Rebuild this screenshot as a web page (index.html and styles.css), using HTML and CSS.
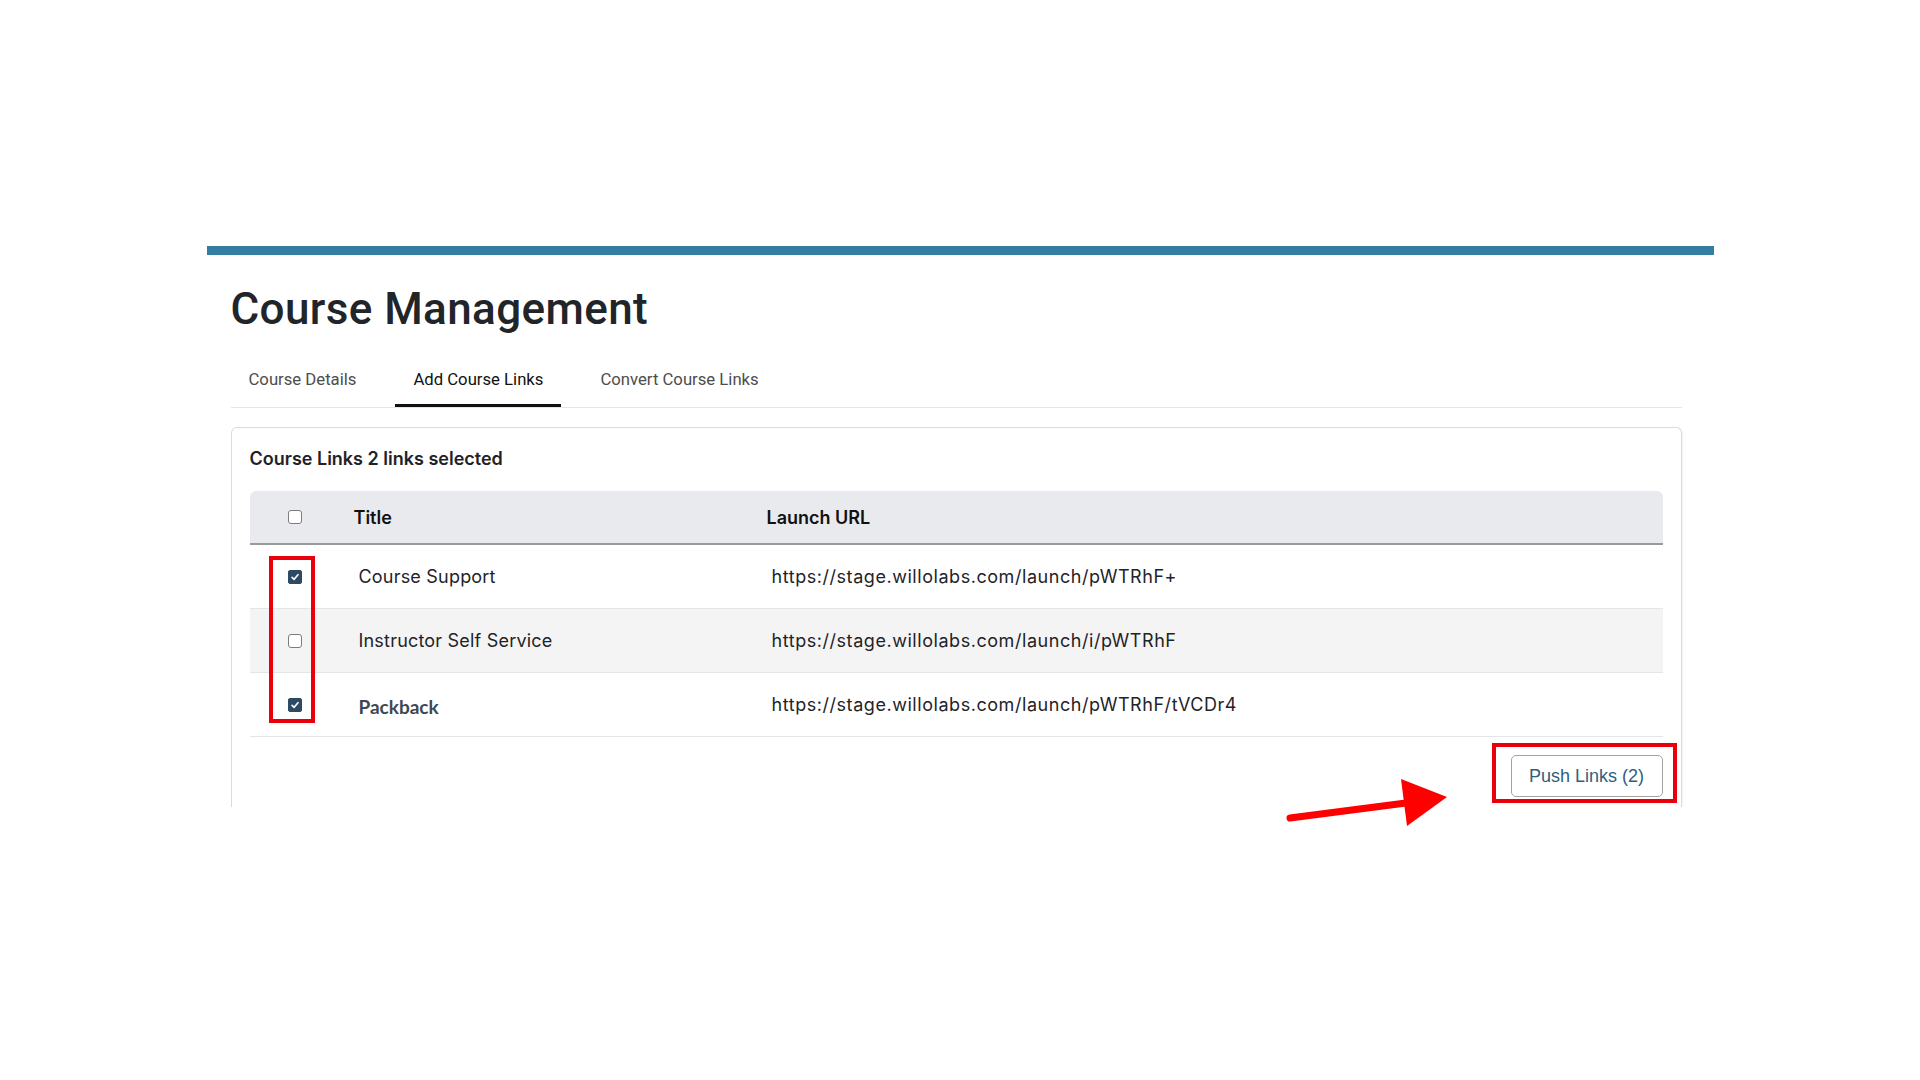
FILE: index.html
```html
<!DOCTYPE html>
<html lang="en">
<head>
<meta charset="utf-8">
<title>Course Management</title>
<link rel="stylesheet" href="styles.css">
</head>
<body>
<div class="page">
  <div class="topbar"></div>
  <main class="content">
    <h1 class="title">Course Management</h1>
    <nav class="tabs">
      <div class="tab">Course Details</div>
      <div class="tab active">Add Course Links</div>
      <div class="tab">Convert Course Links</div>
    </nav>
    <section class="card">
      <h2 class="card-title">Course Links 2 links selected</h2>
      <div class="table">
        <div class="row head">
          <div class="cell check"><span class="cb"></span></div>
          <div class="cell">Title</div>
          <div class="cell">Launch URL</div>
        </div>
        <div class="row">
          <div class="cell check"><span class="cb on"><svg viewBox="0 0 14 14"><path d="M3.6 7.4 L6 9.7 L10.5 4.3"/></svg></span></div>
          <div class="cell">Course Support</div>
          <div class="cell url">https://stage.willolabs.com/launch/pWTRhF+</div>
        </div>
        <div class="row alt">
          <div class="cell check"><span class="cb"></span></div>
          <div class="cell">Instructor Self Service</div>
          <div class="cell url">https://stage.willolabs.com/launch/i/pWTRhF</div>
        </div>
        <div class="row">
          <div class="cell check"><span class="cb on"><svg viewBox="0 0 14 14"><path d="M3.6 7.4 L6 9.7 L10.5 4.3"/></svg></span></div>
          <div class="cell"><span class="pack">Packback</span></div>
          <div class="cell url">https://stage.willolabs.com/launch/pWTRhF/tVCDr4</div>
        </div>
      </div>
      <div class="actions">
        <button class="btn">Push Links (2)</button>
      </div>
    </section>
  </main>
</div>

<div class="mark mark-checks"></div>
<div class="mark mark-button"></div>
<svg class="arrow" viewBox="0 0 180 65" width="180" height="65">
  <line x1="10" y1="48" x2="126" y2="33" />
  <polygon points="121,9 167,27 127,56" />
</svg>
</body>
</html>
```

FILE: styles.css
```css
* { box-sizing: border-box; }

body {
  margin: 0;
  background: #ffffff;
  font-family: "Inter", "Noto Sans", sans-serif;
  color: #1f2328;
  position: relative;
  min-height: 1080px;
}

.page {
  width: 1507px;
  margin: 0 auto;
  padding-top: 246px;
}

.topbar {
  height: 9px;
  background: #337ea2;
}

.content {
  padding: 0 32px 0 24px;
}

.title {
  margin: 28px 0 0;
  font-family: "Roboto", sans-serif;
  font-weight: 500;
  font-size: 44px;
  line-height: 52px;
  letter-spacing: 0.4px;
  color: #212529;
}

.tabs {
  display: flex;
  gap: 21px;
  margin-top: 21px;
  border-bottom: 1px solid #e6e6e6;
}

.tab {
  padding: 12px 18px;
  border-bottom: 3px solid transparent;
  font-family: "Roboto", sans-serif;
  font-size: 16.7px;
  line-height: 24px;
  color: #4d4d4d;
}

.tab.active {
  color: #111111;
  border-bottom-color: #111111;
}

.card {
  margin-top: 19px;
  border: 1px solid #dcdcdc;
  border-bottom: none;
  border-radius: 6px 6px 0 0;
  padding: 19px 18px 10px;
  box-shadow: 1px 0 1px rgba(0,0,0,0.04);
}

.card-title {
  margin: 0;
  font-weight: 600;
  font-size: 18px;
  line-height: 24px;
  color: #1f2328;
}

.table {
  margin-top: 20px;
}

.row {
  display: grid;
  grid-template-columns: 90px 413px 1fr;
  align-items: center;
  height: 64px;
  border-bottom: 1px solid #e2e5ea;
  font-size: 18px;
  letter-spacing: 0.2px;
  color: #1f2328;
}

.row .cell { padding-left: 19px; white-space: nowrap; }
.row .cell.check { padding-left: 0; display: flex; justify-content: center; }
.row .cell.url { letter-spacing: 0.55px; }

.row.alt { background: #f4f4f4; }

.row.head {
  height: 54px;
  background: #e9eaee;
  border-bottom: 2px solid #9a9a9a;
  border-radius: 6px 6px 0 0;
  font-weight: 600;
  font-size: 18px;
  color: #111111;
  letter-spacing: 0;
}

.row.head .cell { padding-left: 14px; }
.row.head .cell.check { padding-left: 0; }

.cb {
  display: block;
  width: 14px;
  height: 14px;
  border: 1px solid #7c7c7c;
  border-radius: 3px;
  background: #ffffff;
}

.cb.on {
  border-color: #2e4a63;
  background: #2e4a63;
  border-radius: 2px;
}

.cb svg {
  display: block;
  width: 12px;
  height: 12px;
}

.cb svg path {
  fill: none;
  stroke: #ffffff;
  stroke-width: 1.9;
  stroke-linecap: round;
  stroke-linejoin: round;
}

.pack {
  display: inline-block;
  margin-top: 4px;
  font-family: "Lato", sans-serif;
  font-weight: 700;
  font-size: 19px;
  letter-spacing: 0;
  color: #3e4852;
}

.actions {
  display: flex;
  justify-content: flex-end;
  margin-top: 18px;
}

.btn {
  width: 152px;
  height: 42px;
  border: 1px solid #a3a3a3;
  border-radius: 5px;
  background: #ffffff;
  font-family: "Liberation Sans", Arial, sans-serif;
  font-size: 18px;
  color: #2f5e7e;
  padding: 0;
}

/* annotation overlays */
.mark {
  position: absolute;
  border: 4px solid #e8000b;
}

.mark-checks {
  left: 269px;
  top: 556px;
  width: 46px;
  height: 167px;
}

.mark-button {
  left: 1492px;
  top: 743px;
  width: 185px;
  height: 60px;
}

.arrow {
  position: absolute;
  left: 1280px;
  top: 770px;
}

.arrow line {
  stroke: #ff0000;
  stroke-width: 7;
  stroke-linecap: round;
}

.arrow polygon { fill: #ff0000; }
```
